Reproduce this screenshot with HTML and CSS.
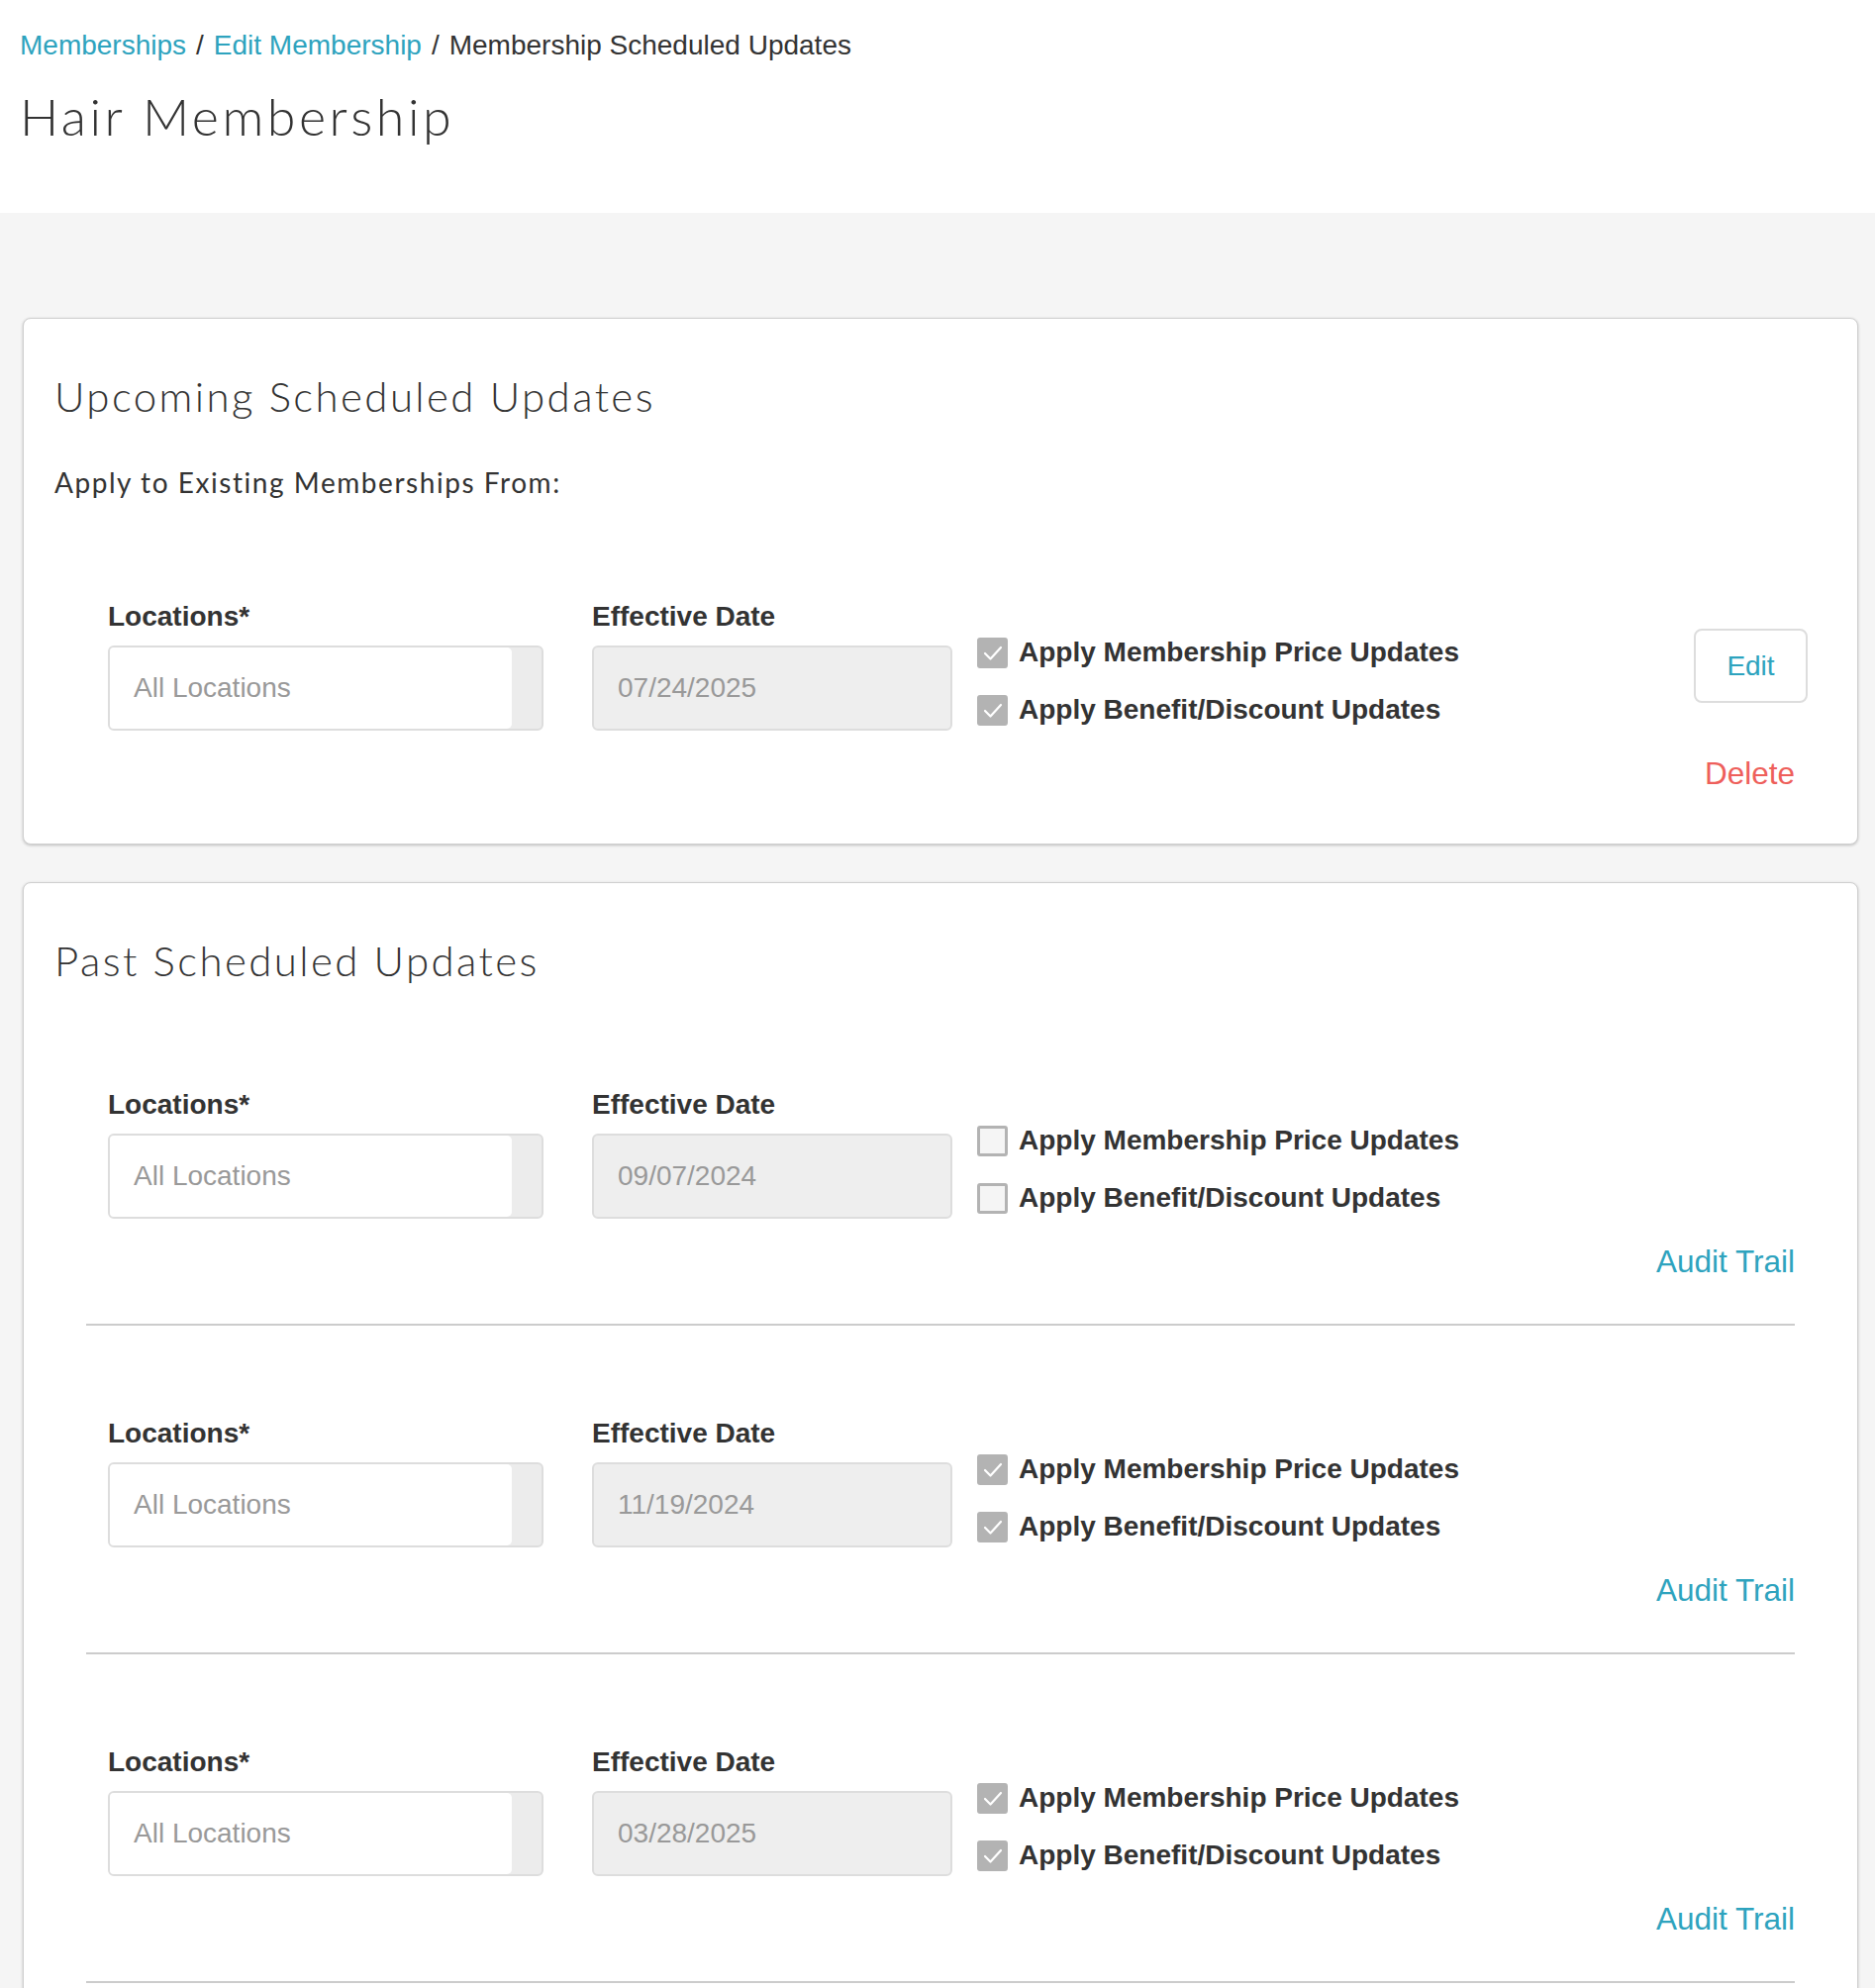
FILE: index.html
```html
<!DOCTYPE html>
<html lang="en">
<head>
<meta charset="utf-8">
<title>Hair Membership - Scheduled Updates</title>
<link rel="stylesheet" href="styles.css">
</head>
<body>
<header class="page-header">
  <nav class="breadcrumb">
    <a href="#">Memberships</a><span class="sep">/</span><a href="#">Edit Membership</a><span class="sep">/</span><span class="current">Membership Scheduled Updates</span>
  </nav>
  <h1 class="page-title">Hair Membership</h1>
</header>

<main class="page-body">
  <section class="card">
    <h2 class="card-title">Upcoming Scheduled Updates</h2>
    <p class="card-sub">Apply to Existing Memberships From:</p>
    <div class="update-row upcoming">
      <div class="row-main">
        <div class="field field-loc">
          <label class="field-label">Locations*</label>
          <div class="select-box"><span class="select-value">All Locations</span><span class="select-arrow"></span></div>
        </div>
        <div class="field field-date">
          <label class="field-label">Effective Date</label>
          <div class="date-box">07/24/2025</div>
        </div>
        <div class="options">
          <div class="option"><span class="cb checked"><svg viewBox="0 0 31 31"><polyline points="8,16 13.5,21.5 24,10"/></svg></span><span class="option-text">Apply Membership Price Updates</span></div>
          <div class="option"><span class="cb checked"><svg viewBox="0 0 31 31"><polyline points="8,16 13.5,21.5 24,10"/></svg></span><span class="option-text">Apply Benefit/Discount Updates</span></div>
        </div>
        <button class="btn-edit">Edit</button>
      </div>
      <div class="row-footer"><a href="#" class="link-delete">Delete</a></div>
    </div>
  </section>

  <section class="card">
    <h2 class="card-title past">Past Scheduled Updates</h2>

    <div class="update-row past-row">
      <div class="row-main">
        <div class="field field-loc">
          <label class="field-label">Locations*</label>
          <div class="select-box"><span class="select-value">All Locations</span><span class="select-arrow"></span></div>
        </div>
        <div class="field field-date">
          <label class="field-label">Effective Date</label>
          <div class="date-box">09/07/2024</div>
        </div>
        <div class="options">
          <div class="option"><span class="cb"></span><span class="option-text">Apply Membership Price Updates</span></div>
          <div class="option"><span class="cb"></span><span class="option-text">Apply Benefit/Discount Updates</span></div>
        </div>
      </div>
      <div class="row-footer"><a href="#" class="link-audit">Audit Trail</a></div>
    </div>

    <div class="update-row past-row">
      <div class="row-main">
        <div class="field field-loc">
          <label class="field-label">Locations*</label>
          <div class="select-box"><span class="select-value">All Locations</span><span class="select-arrow"></span></div>
        </div>
        <div class="field field-date">
          <label class="field-label">Effective Date</label>
          <div class="date-box">11/19/2024</div>
        </div>
        <div class="options">
          <div class="option"><span class="cb checked"><svg viewBox="0 0 31 31"><polyline points="8,16 13.5,21.5 24,10"/></svg></span><span class="option-text">Apply Membership Price Updates</span></div>
          <div class="option"><span class="cb checked"><svg viewBox="0 0 31 31"><polyline points="8,16 13.5,21.5 24,10"/></svg></span><span class="option-text">Apply Benefit/Discount Updates</span></div>
        </div>
      </div>
      <div class="row-footer"><a href="#" class="link-audit">Audit Trail</a></div>
    </div>

    <div class="update-row past-row">
      <div class="row-main">
        <div class="field field-loc">
          <label class="field-label">Locations*</label>
          <div class="select-box"><span class="select-value">All Locations</span><span class="select-arrow"></span></div>
        </div>
        <div class="field field-date">
          <label class="field-label">Effective Date</label>
          <div class="date-box">03/28/2025</div>
        </div>
        <div class="options">
          <div class="option"><span class="cb checked"><svg viewBox="0 0 31 31"><polyline points="8,16 13.5,21.5 24,10"/></svg></span><span class="option-text">Apply Membership Price Updates</span></div>
          <div class="option"><span class="cb checked"><svg viewBox="0 0 31 31"><polyline points="8,16 13.5,21.5 24,10"/></svg></span><span class="option-text">Apply Benefit/Discount Updates</span></div>
        </div>
      </div>
      <div class="row-footer"><a href="#" class="link-audit">Audit Trail</a></div>
    </div>
  </section>
</main>
</body>
</html>
```

FILE: styles.css
```css
* { box-sizing: border-box; }

html, body {
  margin: 0;
  padding: 0;
  background: #f5f5f5;
  color: #333;
  font-family: "Liberation Sans", Arial, sans-serif;
}

a { text-decoration: none; }

.page-header {
  background: #fff;
  height: 215px;
  padding: 26px 20px 0 20px;
}

.breadcrumb {
  font-size: 28px;
  line-height: 40px;
  color: #333;
}
.breadcrumb a { color: #2ea3be; }
.breadcrumb .sep { margin: 0 10px; color: #333; }

.page-title {
  margin: 20px 0 0 0;
  font-family: "Lato", "Liberation Sans", sans-serif;
  font-weight: 300;
  font-size: 52px;
  line-height: 62px;
  letter-spacing: 3.5px;
  color: #333;
}

.page-body {
  padding: 106px 17px 40px 23px;
}

.card {
  background: #fff;
  border: 1px solid #cfcfcf;
  border-radius: 8px;
  box-shadow: 0 1px 3px rgba(0, 0, 0, 0.22);
  padding: 53px 0 48px 0;
  margin-bottom: 38px;
}

.card-title {
  margin: 0 0 0 31px;
  font-family: "Lato", "Liberation Sans", sans-serif;
  font-weight: 300;
  font-size: 42px;
  line-height: 46px;
  letter-spacing: 2.4px;
  color: #333;
  position: relative;
  top: 2px;
}
.card-title.past { margin-bottom: 16px; }

.card-sub {
  margin: 44px 0 8px 31px;
  font-family: "Lato", "Liberation Sans", sans-serif;
  font-size: 28px;
  line-height: 40px;
  letter-spacing: 1.55px;
  color: #333;
  position: relative;
  top: 2px;
}

.update-row {
  margin: 0 63px;
  padding-top: 90px;
}
.update-row.past-row {
  padding-top: 89px;
  padding-bottom: 40px;
  border-bottom: 2px solid #cccccc;
}

.row-main {
  display: flex;
  align-items: flex-start;
  padding-left: 22px;
}

.field-label {
  display: block;
  font-weight: bold;
  font-size: 28px;
  line-height: 40px;
  color: #333;
  margin-bottom: 9px;
}

.field-loc { width: 440px; }
.field-date { width: 364px; margin-left: 49px; }

.select-box {
  display: flex;
  height: 86px;
  border: 2px solid #dddddd;
  border-radius: 6px;
  background: #ececec;
  overflow: hidden;
}
.select-value {
  flex: 1;
  background: #fff;
  border-radius: 0 5px 5px 0;
  display: flex;
  align-items: center;
  padding-left: 24px;
  font-size: 28px;
  color: #999;
}
.select-arrow { width: 30px; }

.date-box {
  height: 86px;
  border: 2px solid #dddddd;
  border-radius: 6px;
  background: #eeeeee;
  display: flex;
  align-items: center;
  padding-left: 24px;
  font-size: 28px;
  color: #999;
}

.options {
  margin-left: 25px;
  padding-top: 36px;
  flex: 1;
}
.option {
  display: flex;
  align-items: flex-start;
  height: 40px;
  margin-bottom: 18px;
}
.option:last-child { margin-bottom: 0; }

.cb {
  width: 31px;
  height: 31px;
  margin-top: 5px;
  border-radius: 3px;
  border: 3px solid #b3b3b3;
  background: #f5f5f5;
  flex: none;
}
.cb.checked {
  background: #b3b3b3;
  border: none;
}
.cb svg { display: block; width: 31px; height: 31px; }
.cb polyline {
  fill: none;
  stroke: #fff;
  stroke-width: 2.2;
  stroke-linecap: round;
  stroke-linejoin: round;
}

.option-text {
  margin-left: 11px;
  font-weight: bold;
  font-size: 28px;
  line-height: 40px;
  color: #333;
  white-space: nowrap;
}

.btn-edit {
  margin-top: 32px;
  margin-right: -13px;
  width: 115px;
  height: 75px;
  background: #fff;
  border: 2px solid #dddddd;
  border-radius: 8px;
  font-family: "Liberation Sans", Arial, sans-serif;
  font-size: 28px;
  color: #2ea3be;
  padding: 0;
}

.row-footer {
  margin-top: 21px;
  text-align: right;
  font-size: 31.5px;
  line-height: 45px;
}
.link-delete { color: #ee5f5b; }
.link-audit { color: #2ea3be; }
```
